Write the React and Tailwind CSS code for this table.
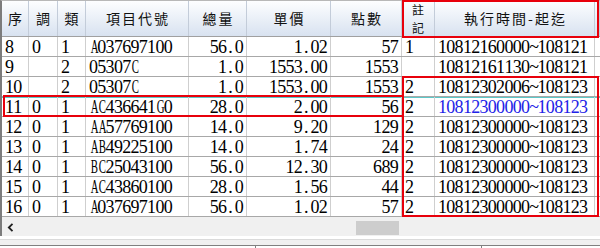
import React from 'react';

const cols = 'grid grid-cols-[27px_29px_28px_103px_58px_84px_71px_33px_160px_1fr]';

const headers = ['序', '調', '類', '項目代號', '總量', '單價', '點數', '註記', '執行時間-起迄', ''];

const rows = [
  ['8', '0', '1', 'A037697100', '56.0', '1.02', '57', '1', '10812160000~108121'],
  ['9', '', '2', '05307C', '1.0', '1553.00', '1553', '', '10812161130~108121'],
  ['10', '', '2', '05307C', '1.0', '1553.00', '1553', '2', '10812302006~108123'],
  ['11', '0', '1', 'AC436641G0', '28.0', '2.00', '56', '2', '10812300000~108123'],
  ['12', '0', '1', 'AA57769100', '14.0', '9.20', '129', '2', '10812300000~108123'],
  ['13', '0', '1', 'AB49225100', '14.0', '1.74', '24', '2', '10812300000~108123'],
  ['14', '0', '1', 'BC25043100', '56.0', '12.30', '689', '2', '10812300000~108123'],
  ['15', '0', '1', 'AC43860100', '28.0', '1.56', '44', '2', '10812300000~108123'],
  ['16', '0', '1', 'A037697100', '56.0', '1.02', '57', '2', '10812300000~108123'],
];

// right aligned columns: 總量, 單價, 點數
const rightCols = [4, 5, 6];

// fixed pitch glyphs, like the old Ming font; capitals squeezed to fit the pitch
function Mono({ text }) {
  return [...text].map((c, i) => (
    <span
      key={i}
      className={`inline-block w-[8.3px] text-center ${/[A-Z]/.test(c) ? 'scale-x-[0.6]' : ''}`}
    >
      {c}
    </span>
  ));
}

function HeaderRow() {
  return (
    <div className={`${cols} h-[36px] border-b border-[#a0a0a0] bg-gradient-to-b from-[#fdfeff] to-[#d8e2f0]`}>
      {headers.map((h, i) => (
        <div
          key={i}
          className="flex items-center justify-center border-r border-[#c3ccd9] text-[14px] leading-[15px] tracking-[2px] text-[#111] [font-family:'Noto_Sans_CJK_TC',sans-serif]"
        >
          {h === '註記' ? (
            <div className="flex flex-col items-center text-[12px] leading-[17.5px] tracking-normal">
              <span>註</span>
              <span>記</span>
            </div>
          ) : (
            <span className="pl-[2px]">{h}</span>
          )}
        </div>
      ))}
    </div>
  );
}

function DataRow({ row }) {
  const selected = row[0] === '11';
  return (
    <div className={`${cols} h-[20px] border-b border-[#a8a8a8] ${selected ? 'shadow-[inset_0_1px_0_#5cc8c8]' : ''}`}>
      {row.map((v, i) => (
        <div
          key={i}
          className={`flex h-full items-center overflow-hidden whitespace-nowrap border-r border-[#cfcfcf] text-[18px] leading-[20px] [font-family:'Liberation_Serif',serif] ${
            rightCols.includes(i) ? 'justify-end pr-[3px]' : 'justify-start pl-[3px]'
          } ${selected && i === 8 ? 'text-[#2222e6]' : 'text-black'}`}
        >
          <Mono text={v} />
        </div>
      ))}
      <div />
    </div>
  );
}

export default function App() {
  return (
    <div className="relative h-[248px] w-[600px] overflow-hidden bg-white">
      <div className="border-l-2 border-t border-l-[#7c7c7c] border-t-[#b8b8b8]">
        <HeaderRow />
        {rows.map((r, i) => (
          <DataRow key={i} row={r} />
        ))}
        {/* horizontal scrollbar */}
        <div className="flex h-[19px] items-center bg-[#f0f0f0]">
          <div className="flex w-[17px] items-center justify-center pt-[2px]">
            <svg width="7" height="9" viewBox="0 0 7 9">
              <path d="M5.5 0.8 L1.8 4.5 L5.5 8.2" fill="none" stroke="#202020" strokeWidth="1.8" />
            </svg>
          </div>
          <div className="ml-[337px] mt-[3px] h-[14px] w-[43px] bg-[#cdcdcd]" />
        </div>
      </div>

      {/* lower panel edge */}
      <div className="h-[3px] bg-white" />
      <div className="h-[6px] border-t border-[#dadada] bg-[#f0f0f0]" />
      <div className="flex h-[3px] border-t border-[#808080] pl-[255px]">
        <div className="h-full w-px bg-[#808080]" />
        <div className="ml-[225px] h-full w-px bg-[#808080]" />
      </div>

      {/* red annotation boxes */}
      <div className="absolute left-[402px] top-0 h-[38px] w-[197px] border-2 border-[#e8000b]" />
      <div className="absolute left-[3px] top-[95px] h-[22px] w-[401px] border-2 border-r-0 border-[#e8000b]" />
      <div className="absolute left-[402px] top-[76px] h-[141px] w-[197px] border-2 border-[#e8000b]" />
    </div>
  );
}
